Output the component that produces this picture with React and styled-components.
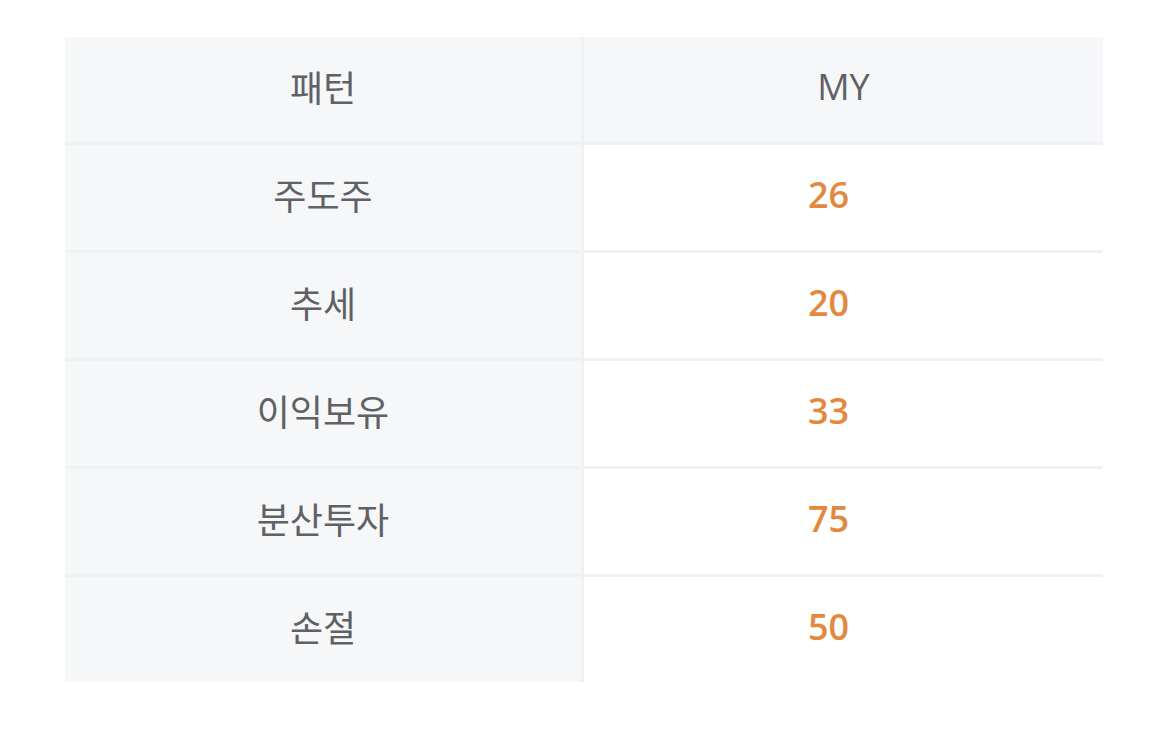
import React from "react";
import styled, { createGlobalStyle } from "styled-components";

const GlobalStyle = createGlobalStyle`
  body {
    margin: 0;
    background: #ffffff;
    font-family: "Open Sans", "Noto Sans CJK KR", sans-serif;
  }
`;

const Page = styled.div`
  padding: 37px 66px 0 65px;
`;

const Table = styled.div`
  display: grid;
  grid-template-columns: 519px 1fr;
  width: 1038px;
`;

const Cell = styled.div`
  box-sizing: border-box;
  height: ${(p) => (p.$last ? "105px" : "108px")};
  display: flex;
  align-items: center;
  justify-content: center;
  padding-bottom: ${(p) => (p.$value ? "7px" : "6px")};
  padding-right: ${(p) => (p.$value ? "30px" : "0")};
  font-family: "Open Sans", "Noto Sans CJK KR", sans-serif;
  font-size: 36px;
  color: ${(p) => (p.$value ? "#e2893f" : "#5f6165")};
  font-weight: ${(p) => (p.$value ? 600 : 400)};
  background: ${(p) => (p.$shaded ? "#f6f7f9" : "#ffffff")};
  border-bottom: ${(p) => (p.$last ? "none" : "3px solid #f0f1f3")};
  border-right: ${(p) => (p.$left ? "3px solid #f0f1f3" : "none")};
`;

const rows = [
  ["주도주", 26],
  ["추세", 20],
  ["이익보유", 33],
  ["분산투자", 75],
  ["손절", 50],
];

function App() {
  return (
    <>
      <GlobalStyle />
      <Page>
        <Table>
          <Cell $shaded $left>패턴</Cell>
          <Cell $shaded>MY</Cell>
          {rows.map(([name, value], i) => (
            <React.Fragment key={name}>
              <Cell $shaded $left $last={i === rows.length - 1}>
                {name}
              </Cell>
              <Cell $value $last={i === rows.length - 1}>
                {value}
              </Cell>
            </React.Fragment>
          ))}
        </Table>
      </Page>
    </>
  );
}

export default App;
